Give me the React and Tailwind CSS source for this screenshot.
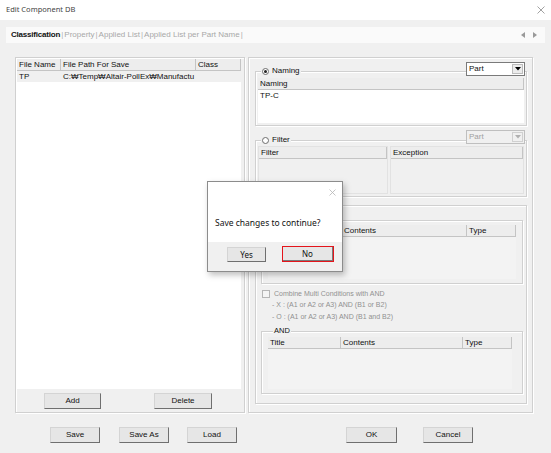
import React from 'react';

const etched = 'border border-[#d0d0d0] shadow-[inset_1px_1px_0_#ffffff,1px_1px_0_#ffffff]';

function Btn({ w, label, className = '' }) {
  return (
    <div
      className={`h-[16px] flex items-center justify-center bg-[#e6e6e6] border border-t-[#d4d4d4] border-l-[#d4d4d4] border-r-[#6f6f6f] border-b-[#6f6f6f] text-[8px] text-[#111] ${w} ${className}`}
    >
      {label}
    </div>
  );
}

function Header({ cols, className = '' }) {
  return (
    <div className={`flex h-[12px] shrink-0 ${className}`}>
      {cols.map(([label, w], i) => (
        <div
          key={i}
          className={`${w} h-full flex items-center pl-[2px] bg-[#ededed] border-r border-b border-[#c4c4c4] text-[8px] text-[#111] truncate`}
        >
          {label}
        </div>
      ))}
    </div>
  );
}

function Combo({ disabled, className }) {
  return (
    <div
      className={`absolute w-[59px] h-[14px] flex items-center border ${
        disabled ? 'border-[#bfbfbf] bg-[#f0f0f0] text-[#a0a0a0]' : 'border-[#7a7a7a] bg-white text-[#111]'
      } ${className}`}
    >
      <span className="flex-1 pl-[2px] text-[8px]">Part</span>
      <div
        className={`w-[11px] h-[10px] mr-[1px] flex items-center justify-center border ${
          disabled ? 'border-[#d0d0d0] bg-[#f0f0f0]' : 'border-[#bcbcbc] bg-[#ececec]'
        }`}
      >
        <svg width="6" height="4" viewBox="0 0 6 4">
          <path d="M0 0h6L3 3.5z" fill={disabled ? '#b0b0b0' : '#000'} />
        </svg>
      </div>
    </div>
  );
}

function Radio({ checked }) {
  return (
    <div className="w-[7px] h-[7px] rounded-full border border-[#6d6d6d] bg-white flex items-center justify-center">
      {checked && <div className="w-[3px] h-[3px] rounded-full bg-[#222]" />}
    </div>
  );
}

export default function App() {
  return (
    <div className="relative w-[551px] h-[453px] bg-[#f0f0f0] overflow-hidden font-['Liberation_Sans',Arial,sans-serif] text-[#111]">
      {/* title bar */}
      <div className="h-[20px] bg-white flex items-center justify-between pl-[6px] pr-[6px]">
        <span className="font-['Noto_Sans',sans-serif] text-[7.5px] text-[#444]">Edit Component DB</span>
        <svg width="8" height="8" viewBox="0 0 8 8">
          <path d="M0.5 0.5l7 7M7.5 0.5l-7 7" stroke="#8a8a8a" strokeWidth="0.8" />
        </svg>
      </div>

      {/* tab strip */}
      <div className="mt-[7px] mx-[6px] h-[16px] bg-[#fafafa] flex items-center pl-[5px] pr-[8px] text-[8px]">
        <span className="font-bold text-[#111] tracking-[-0.2px]">Classification</span>
        <span className="text-[#b0b0b0] mx-[1px]">|</span>
        <span className="text-[#a8a8a8]">Property</span>
        <span className="text-[#b0b0b0] mx-[1px]">|</span>
        <span className="text-[#a8a8a8]">Applied List</span>
        <span className="text-[#b0b0b0] mx-[1px]">|</span>
        <span className="text-[#a8a8a8]">Applied List per Part Name</span>
        <span className="text-[#b0b0b0] mx-[1px]">|</span>
        <div className="ml-auto flex items-center gap-[8px]">
          <svg width="4" height="6" viewBox="0 0 4 6">
            <path d="M4 0v6L0 3z" fill="#9a9a9a" />
          </svg>
          <svg width="4" height="6" viewBox="0 0 4 6">
            <path d="M0 0v6l4-3z" fill="#9a9a9a" />
          </svg>
        </div>
      </div>

      {/* panels */}
      <div className="mt-[14px] flex">
        {/* left panel */}
        <div className={`ml-[15px] w-[230px] h-[356px] flex flex-col p-[1px] pr-[3px] ${etched}`}>
          <div className="flex-1 flex flex-col bg-white">
            <Header
              cols={[
                ['File Name', 'w-[44px]'],
                ['File Path For Save', 'w-[135px]'],
                ['Class', 'w-[45px]'],
              ]}
            />
            <div className="flex h-[11px] bg-[#f0f0f0] text-[8px] items-center">
              <span className="w-[44px] pl-[2px]">TP</span>
              <span className="w-[135px] pl-[2px] whitespace-nowrap overflow-hidden">C:₩Temp₩Altair-PollEx₩Manufactu</span>
            </div>
          </div>
          <div className="h-[22px] flex items-center pt-[2px]">
            <Btn w="w-[57px]" label="Add" className="ml-[27px]" />
            <Btn w="w-[58px]" label="Delete" className="ml-[53px]" />
          </div>
        </div>

        {/* right panel */}
        <div className={`ml-[3px] w-[285px] h-[356px] flex flex-col ${etched}`}>
          {/* naming group */}
          <div className={`relative ml-[6px] mt-[13px] w-[272px] h-[55px] pt-[6px] pl-[2px] pr-[2px] pb-[2px] ${etched}`}>
            <div className="absolute left-[5px] -top-[6px] h-[10px] px-[1px] flex items-center gap-[3px] bg-[#f0f0f0] text-[8px]">
              <Radio checked />
              <span>Naming</span>
            </div>
            <Combo className="right-[1px] -top-[10px]" />
            <div className="h-full bg-white flex flex-col">
              <Header cols={[['Naming', 'w-full']]} />
              <div className="h-[11px] pl-[2px] flex items-center text-[8px]">TP-C</div>
            </div>
          </div>

          {/* filter group */}
          <div className={`relative ml-[6px] mt-[14px] w-[272px] h-[57px] pt-[5px] pl-[2px] pr-[2px] pb-[2px] flex gap-[2px] ${etched}`}>
            <div className="absolute left-[5px] -top-[6px] h-[10px] px-[1px] flex items-center gap-[3px] bg-[#f0f0f0] text-[8px]">
              <Radio />
              <span>Filter</span>
            </div>
            <Combo disabled className="right-[1px] -top-[11px]" />
            <div className="w-[130px] h-full border border-[#e2e2e2] bg-[#f0f0f0]">
              <Header cols={[['Filter', 'w-full']]} />
            </div>
            <div className="flex-1 h-full border border-[#e2e2e2] bg-[#f0f0f0]">
              <Header cols={[['Exception', 'w-full']]} />
            </div>
          </div>

          {/* condition group */}
          <div className={`ml-[6px] mt-[8px] w-[272px] h-[199px] flex flex-col ${etched}`}>
            <div className={`relative ml-[5px] mt-[14px] w-[262px] h-[64px] pl-[6px] pt-[4px] ${etched}`}>
              <Header
                cols={[
                  ['', 'w-[74px]'],
                  ['Contents', 'w-[125px]'],
                  ['Type', 'w-[49px]'],
                ]}
              />
              <div className="w-[248px] h-[42px] bg-[#f3f3f3]" />
            </div>

            <div className="ml-[6px] mt-[5px] flex items-center gap-[4px] h-[10px] text-[7px] text-[#909090]">
              <div className="w-[8px] h-[8px] border border-[#b5b5b5] bg-[#f4f4f4]" />
              <span>Combine Multi Conditions with AND</span>
            </div>
            <div className="ml-[16px] h-[12px] flex items-center text-[7px] text-[#909090]">
              - X : (A1 or A2 or A3) AND (B1 or B2)
            </div>
            <div className="ml-[16px] h-[12px] flex items-center text-[7px] text-[#909090]">
              - O : (A1 or A2 or A3) AND (B1 and B2)
            </div>

            <div className={`relative ml-[5px] mt-[8px] w-[262px] h-[63px] pl-[6px] pt-[5px] ${etched}`}>
              <span className="absolute left-[11px] -top-[6px] h-[9px] flex items-center px-[1px] bg-[#f0f0f0] text-[7.5px]">AND</span>
              <Header
                cols={[
                  ['Title', 'w-[73px]'],
                  ['Contents', 'w-[122px]'],
                  ['Type', 'w-[49px]'],
                ]}
              />
              <div className="w-[244px] h-[40px] bg-[#f3f3f3]" />
            </div>
          </div>
        </div>
      </div>

      {/* bottom buttons */}
      <div className="mt-[14px] flex">
        <Btn w="w-[50px]" label="Save" className="ml-[50px]" />
        <Btn w="w-[50px]" label="Save As" className="ml-[19px]" />
        <Btn w="w-[50px]" label="Load" className="ml-[18px]" />
        <Btn w="w-[51px]" label="OK" className="ml-[109px]" />
        <Btn w="w-[50px]" label="Cancel" className="ml-[26px]" />
      </div>

      {/* modal dialog */}
      <div className="absolute left-[207px] top-[181px] w-[136px] h-[91px] flex flex-col border border-[#8c8c8c] bg-white shadow-[2px_3px_6px_rgba(0,0,0,0.25)] font-['Noto_Sans',sans-serif]">
        <div className="h-[60px] flex flex-col">
          <div className="h-[20px] flex justify-end items-center pr-[6px]">
            <svg width="7" height="7" viewBox="0 0 7 7">
              <path d="M0.5 0.5l6 6M6.5 0.5l-6 6" stroke="#b5b5b5" strokeWidth="0.8" />
            </svg>
          </div>
          <div className="pl-[7px] mt-[15px] text-[8.5px] text-[#111]">Save changes to continue?</div>
        </div>
        <div className="flex-1 bg-[#f0f0f0] flex items-start pt-[5px]">
          <Btn w="w-[39px]" label="Yes" className="ml-[19px] !h-[15px] font-['Noto_Sans',sans-serif]" />
          <div className="ml-[16px] -mt-[1px] w-[52px] h-[16px] border-[1.5px] border-[#e4141b] flex">
            <div className="flex-1 flex items-center justify-center bg-[#e6e6e6] border-r border-b border-[#7a7a7a] text-[8px]">No</div>
          </div>
        </div>
      </div>
    </div>
  );
}
